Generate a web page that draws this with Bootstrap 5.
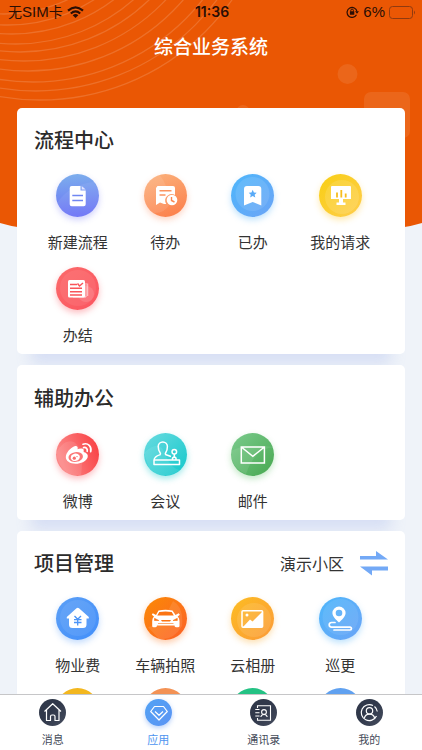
<!DOCTYPE html>
<html lang="zh-CN">
<head>
<meta charset="utf-8">
<meta name="viewport" content="width=device-width, initial-scale=1">
<title>综合业务系统</title>
<link href="https://cdn.jsdelivr.net/npm/bootstrap@5.3.0/dist/css/bootstrap.min.css" rel="stylesheet">
<style>
body{font-family:"Liberation Sans","Noto Sans CJK SC",sans-serif;background:#eff3f9;color:#333}
.cn{font-family:"Noto Sans CJK SC",sans-serif}
.scene{z-index:0}
.backdrop{z-index:-1;height:229px}
.status{height:24px;color:#2a0e04;font-size:15px;line-height:24px;padding:0 6px 0 8px}
.carrier{font-size:14px}
.carrier b{font-size:15px;font-weight:400}
.clock{font-family:Inter,sans-serif;font-weight:600;font-size:14px}
.apptitle{font-size:19px;font-weight:500;line-height:28px;padding:8px 0 48px}
.panels{padding:0 17px;gap:11px;scrollbar-width:none}
.panel{border-radius:5px;padding:18px 17px 9px;box-shadow:0 24px 14px -14px rgba(140,160,230,.24)}
.panel h2{font-size:20px;font-weight:500;line-height:28px;margin:0;color:#2b2b2b}
.tiles{display:grid;grid-template-columns:repeat(4,1fr);row-gap:15px;padding:20px 4px 0 0}
.roomy{padding-top:19px}
.roomy .tiles{padding-top:21px}
.tiles.tight{row-gap:13px}
.tile{font-size:15px;line-height:20px;gap:15px;color:#333}
.disc{width:43px;height:43px;border-radius:50%}
.disc svg,.tabdisc svg{display:block;width:100%;height:100%}
.indigo{background:linear-gradient(175deg,#7db0ec,#686cf7);box-shadow:0 3px 6px #686cf750}
.peach{background:linear-gradient(160deg,#fbb27c,#fc7c48);box-shadow:0 3px 6px #fc7c4850}
.sky{background:linear-gradient(135deg,#4db6fb,#6ba4f6);box-shadow:0 3px 6px #55b4fb60}
.gold{background:linear-gradient(135deg,#f8cf12,#ffcd4e);box-shadow:0 3px 6px #ffd04a70}
.rose{background:linear-gradient(135deg,#fb6a6a,#fb5560);box-shadow:0 3px 6px #fb556060}
.coral{background:linear-gradient(70deg,#fb8585 20%,#f9393d);box-shadow:0 3px 6px #fb556060}
.aqua{background:linear-gradient(135deg,#6adbe0,#12c8cb);box-shadow:0 3px 6px #12c8cb60}
.leaf{background:linear-gradient(135deg,#7bcb8d,#47a850);box-shadow:0 3px 6px #47b85050}
.azure{background:linear-gradient(135deg,#5b9ff6,#438ffa);box-shadow:0 3px 6px #438ffa50}
.flame{background:linear-gradient(135deg,#fb8a05,#fc6127);box-shadow:0 3px 6px #fc7c2760}
.amber{background:linear-gradient(135deg,#fdbd22,#fb9a38);box-shadow:0 3px 6px #fbb03860}
.honey{background:#f3b71f}.clay{background:#f39255}.mint{background:#24c284}.blue{background:#60a1f0}
.site{font-size:16px;line-height:24px;gap:16px;color:#333}
.tabs{border-top:1px solid #c6c6c8;height:56px;padding-top:4px;z-index:2}
.tab{font-size:11px;line-height:16px;gap:5px;color:#454b5a}
.tab.on{color:#4d94f0}
.tabdisc{width:27px;height:27px;border-radius:50%;background:linear-gradient(135deg,#30384a 45%,#464d5f)}
.on .tabdisc{background:linear-gradient(135deg,#51a2f4,#5c94f4);box-shadow:0 2px 5px #5c94f470}
</style>
<script src="https://cdn.jsdelivr.net/npm/bootstrap@5.3.0/dist/js/bootstrap.bundle.min.js"></script>
</head>
<body>
<div class="scene position-relative vh-100 d-flex flex-column overflow-hidden">
<svg class="backdrop position-absolute top-0 start-0 w-100" viewBox="0 0 422 229" preserveAspectRatio="none" aria-hidden="true">
<path fill="#ea5704" d="M0 0H422V223Q402 229 380 229H42Q20 229 0 223Z"/>
<g fill="none" stroke="#fff" stroke-opacity=".15" stroke-width="1.3"><circle cx="40" cy="-134" r="234"/><circle cx="36" cy="-134" r="225"/><circle cx="33" cy="-134" r="216"/><circle cx="28" cy="-134" r="205"/><circle cx="24" cy="-134" r="195"/><circle cx="20" cy="-134" r="186"/><circle cx="16" cy="-134" r="178"/><circle cx="12" cy="-134" r="168"/><circle cx="8" cy="-134" r="159"/><circle cx="4" cy="-134" r="148"/></g>
<g fill="#fff" fill-opacity=".09"><circle cx="347.500" cy="74" r="10"/><rect x="364" y="92" width="46" height="46" rx="7"/><circle cx="243" cy="112" r="7"/></g>
</svg>

<div class="status row g-0 align-items-center flex-shrink-0">
<div class="col d-flex align-items-center gap-1"><span class="carrier">无<b>SIM</b>卡</span>
<svg width="17" height="12" viewBox="0 0 17 12" aria-label="Wi-Fi"><g fill="none" stroke="#2a0e04" stroke-width="2.200"><path d="M1 4.600Q8.500-2 16 4.600"/><path d="M3.800 7.500Q8.500 3.400 13.200 7.500"/></g><path fill="#2a0e04" d="M5.700 9.200Q8.500 6.900 11.300 9.200L8.500 12Z"/></svg></div>
<div class="col-auto clock">11:36</div>
<div class="col d-flex align-items-center justify-content-end gap-1">
<svg width="13" height="12" viewBox="0 0 13 12" aria-hidden="true"><path d="M10.500 8.800A5 5 0 1 1 11 5.500" fill="none" stroke="#2a0e04" stroke-width="1.200"/><path d="M9 5.200H13L11 7.800Z" fill="#2a0e04"/><rect x="3.900" y="5.300" width="4.400" height="3.400" rx=".5" fill="#2a0e04"/><path d="M4.800 5.500V4.400a1.300 1.300 0 0 1 2.600 0V5.500" fill="none" stroke="#2a0e04"/></svg>
<span>6%</span>
<svg width="27" height="13" viewBox="0 0 27 13" aria-hidden="true"><rect x=".5" y=".5" width="23" height="12" rx="3" fill="none" stroke="#8f3a10"/><path d="M25 4.500Q27 6.500 25 8.500Z" fill="#8f3a10"/></svg>
</div></div>
<h1 class="apptitle cn text-white text-center m-0 flex-shrink-0">综合业务系统</h1>

<main class="panels cn d-flex flex-column flex-fill overflow-auto">
<section class="panel bg-white flex-shrink-0">
<h2>流程中心</h2>
<div class="tiles">
<button class="tile btn border-0 p-0 d-flex flex-column align-items-center"><span class="disc indigo"><svg viewBox="0 0 43 43"><path d="M0 30Q14 10 38 8A21 21 0 0 1 21 43Q5 42 0 30" fill="#fff" opacity=".07"/><path fill="#fff" d="M15.700 12H24.500V16.500H29.700V30.300a2 2 0 0 1-2 2H15.700a2 2 0 0 1-2-2V14a2 2 0 0 1 2-2Z"/><path fill="#e3e4ff" d="M25.700 12L29.700 15.600H25.700Z"/><path stroke="#6f86f2" stroke-width="1.600" d="M16.300 21.500H27M16.300 26.500H27"/></svg></span>新建流程</button>
<button class="tile btn border-0 p-0 d-flex flex-column align-items-center"><span class="disc peach"><svg viewBox="0 0 43 43"><path d="M15 0Q25 12 26 30Q20 40 9 39Q-3 30 1 14Q6 3 15 0" fill="#fff" opacity=".1"/><path fill="#fff" d="M13.500 12H29a2 2 0 0 1 2 2V21a6.500 6.500 0 0 0-8.800 9H20L16 28.500 12 31V14Z"/><path stroke="#fb9460" stroke-width="1.400" d="M15.500 16.700H27.500M15.500 21H21.500"/><circle cx="28" cy="26" r="5.300" fill="#fff"/><path d="M27.500 23V26.500L30.500 28" fill="none" stroke="#fb8750" stroke-width="1.400"/></svg></span>待办</button>
<button class="tile btn border-0 p-0 d-flex flex-column align-items-center"><span class="disc sky"><svg viewBox="0 0 43 43"><circle cx="21.500" cy="20" r="17" fill="#fff" opacity=".1"/><path fill="#fff" d="M16 12H27.300a3 3 0 0 1 3 3V31.500L21.700 28 13 31.500V15a3 3 0 0 1 3-3Z"/><path fill="#58aaf7" d="M21.700 15.800L22.900 18.600 25.700 18.800 23.600 20.700 24.300 23.600 21.700 22.100 19.100 23.600 19.800 20.700 17.700 18.800 20.500 18.600Z"/></svg></span>已办</button>
<button class="tile btn border-0 p-0 d-flex flex-column align-items-center"><span class="disc gold"><svg viewBox="0 0 43 43"><circle cx="23" cy="23" r="17" fill="#fff" opacity=".12"/><path fill="#fff" d="M13 12H31a1 1 0 0 1 1 1V25H24V28.500H26.500V31H17.500V28.500H20V25H12V13a1 1 0 0 1 1-1Z"/><path stroke="#f7bd1d" stroke-width="1.800" d="M18 18.500V23.500M22.300 16V23.500M26.700 19.500V23.500"/></svg></span>我的请求</button>
<button class="tile btn border-0 p-0 d-flex flex-column align-items-center"><span class="disc rose"><svg viewBox="0 0 43 43"><circle cx="22" cy="21" r="18" fill="#fff" opacity=".07"/><circle cx="30" cy="27" r="8" fill="#fff" opacity=".13"/><rect x="12" y="13" width="17" height="17.500" rx="1.500" fill="#fff"/><path d="M30 16V30H17M31.700 16.500V29" fill="none" stroke="#fff" stroke-width=".8" opacity=".8"/><path stroke="#f9545a" stroke-width="1.500" d="M14 17.500H21M14 21.300H26M14 24.700H26M14 28H26" /><path d="M21.500 16.500L23.500 19 27 16" fill="none" stroke="#f9545a" stroke-width="1.500"/></svg></span>办结</button>
</div></section>

<section class="panel roomy bg-white flex-shrink-0">
<h2>辅助办公</h2>
<div class="tiles">
<button class="tile btn border-0 p-0 d-flex flex-column align-items-center"><span class="disc coral"><svg viewBox="0 0 43 43"><path d="M0 20Q8 5 18 9Q29 16 25 42Q5 45 0 20" fill="#fff" opacity=".1"/><path fill="#fff" d="M18.500 13.300C21 12.500 22.300 14 21.500 16.300C24 15.300 27.500 15.300 27.700 17C27.800 18 27.200 18.800 28.200 19.200C31 20 32.500 22 31.500 24.700C30 28.500 25 30.700 19.500 30.700C14 30.700 9.800 28 9.800 24C9.800 20 14.500 14.600 18.500 13.300Z"/><ellipse cx="19.700" cy="24" rx="7.300" ry="4.900" fill="#fb7777" transform="rotate(-8 19.700 24)"/><ellipse cx="19.300" cy="24.300" rx="4.600" ry="3.700" fill="#fff" transform="rotate(-15 19.300 24.300)"/><circle cx="18.300" cy="25.200" r="1.600" fill="#f96b6b"/><circle cx="21" cy="23.600" r=".7" fill="#f96b6b"/><path d="M27 11.200C32 9.500 36 13.500 34.700 18.600M27.600 14.600C30 14 31.900 15.800 31.200 18.300" fill="none" stroke="#fff" stroke-width="1.700" stroke-linecap="round"/></svg></span>微博</button>
<button class="tile btn border-0 p-0 d-flex flex-column align-items-center"><span class="disc aqua"><svg viewBox="0 0 43 43"><path d="M0 20Q16 5 21 21Q27 36 36 37Q19 49 5 35Z" fill="#fff" opacity=".09"/><g fill="none" stroke="#fff" stroke-width="1.500" stroke-linejoin="round"><path d="M10 27V31.500H35.500V27ZM10 27C10.500 23.500 13 22.800 16 21.800Q17 21 16 19.500Q14.200 17 14.200 13.500A4.600 4.600 0 0 1 23.400 13.500Q23.400 17 21.800 19.500Q20.800 21 22 21.800Q24 22.500 27 23.500M28.500 27V25Q30.300 23.300 32 25V27M30.300 21V24"/><circle cx="30.300" cy="18.800" r="2.300"/></g></svg></span>会议</button>
<button class="tile btn border-0 p-0 d-flex flex-column align-items-center"><span class="disc leaf"><svg viewBox="0 0 43 43"><path d="M0 18Q14 10 43 14Q24 15 15 41Q0 35 0 18" fill="#fff" opacity=".09"/><path d="M10.300 14H33.400V30H10.300ZM10.300 14L21.800 23.300 33.400 14" fill="none" stroke="#fff" stroke-width="1.500"/></svg></span>邮件</button>
</div></section>

<section class="panel bg-white flex-shrink-0">
<div class="d-flex justify-content-between align-items-center"><h2>项目管理</h2>
<button class="site btn border-0 p-0 d-flex align-items-center">演示小区<svg width="28" height="26" viewBox="0 0 28 26" aria-hidden="true"><path fill="#73a9f6" d="M0 6H16V1L28 9.500H0ZM28 20.500H12V25.500L0 16.500H28Z"/></svg></button></div>
<div class="tiles tight">
<button class="tile btn border-0 p-0 d-flex flex-column align-items-center"><span class="disc azure"><svg viewBox="0 0 43 43"><circle cx="22" cy="21" r="18" fill="#fff" opacity=".08"/><path fill="#fff" d="M20.500 11.200Q21.700 10.200 23 11.200L32.800 20V21.500H30.500V27.500a3.500 3.500 0 0 1-3.500 3.500H16.500a3.500 3.500 0 0 1-3.500-3.500V21.500H10.800V20Z"/><path d="M18.500 19L21.700 22.300 25 19M21.700 22V28.500M18 22.700H25.500M18 25.500H25.500" fill="none" stroke="#4b94f7" stroke-width="1.300"/></svg></span>物业费</button>
<button class="tile btn border-0 p-0 d-flex flex-column align-items-center"><span class="disc flame"><svg viewBox="0 0 43 43"><path d="M4 30Q18 28 29 4Q40 10 38 29Q29 44 15 42Z" fill="#fff" opacity=".1"/><path fill="#fff" d="M14.500 13.500Q21.500 12 28.500 13.500L31.500 18 34.700 16.300 35.800 17.800 33.700 19.500Q35.500 21 35.500 24V29Q35.500 30.300 34 30.300H32Q30.500 30.300 30.500 28.500H13Q13 30.300 11.500 30.300H9.500Q8.200 30.300 8.200 29V24Q8.200 21 10 19.500L7.800 17.800 8.800 16.300 12 18Z"/><path fill="#fb7413" d="M15.300 15Q21.500 13.900 27.700 15L29.800 18.500H13.200ZM17 23H27L26 24.500H18Z"/><path d="M10.500 21.300L14.800 23.500H10.500ZM33.300 21.300L29 23.500H33.300ZM14 26.500H29.500" fill="#fb7413" stroke="#fb7413" stroke-width=".6"/></svg></span>车辆拍照</button>
<button class="tile btn border-0 p-0 d-flex flex-column align-items-center"><span class="disc amber"><svg viewBox="0 0 43 43"><circle cx="23" cy="23" r="17" fill="#fff" opacity=".1"/><rect x="11" y="13.700" width="20.600" height="16.600" rx="1" fill="none" stroke="#fff" stroke-width="1.500"/><path fill="#fff" d="M12 30L19 22.500 21.500 24.500 31.500 14.500V30Z"/><circle cx="16" cy="18" r="1.500" fill="#fff"/></svg></span>云相册</button>
<button class="tile btn border-0 p-0 d-flex flex-column align-items-center"><span class="disc sky"><svg viewBox="0 0 43 43"><circle cx="21.500" cy="20" r="18" fill="#fff" opacity=".08"/><path fill="#fff" fill-rule="evenodd" d="M20 9.500a6.600 6.600 0 0 1 6.600 6.600C26.600 19.500 23 23 20 25.500C17 23 13.400 19.500 13.400 16.100A6.600 6.600 0 0 1 20 9.500ZM20 12.700a3.300 3.300 0 1 0 0 6.600a3.300 3.300 0 0 0 0-6.600Z"/><path d="M16 25.500H12.500a2.300 2.300 0 0 0 0 4.600H31a1.300 1.300 0 0 1 0 2.900H15" fill="none" stroke="#fff" stroke-width="1.700" stroke-linecap="round"/></svg></span>巡更</button>
<span class="disc honey mx-auto"></span><span class="disc clay mx-auto"></span><span class="disc mint mx-auto"></span><span class="disc blue mx-auto"></span>
</div></section>
</main>

<nav class="tabs cn bg-white row g-0 flex-shrink-0">
<a href="#" class="tab col d-flex flex-column align-items-center text-decoration-none"><span class="tabdisc"><svg viewBox="0 0 27 27" fill="none" stroke="#fff" stroke-width="1.200" stroke-linejoin="round"><path d="M5.500 12.500L13.700 4.700 22 12.500M7.500 11V21.500H11.500V17.500a1.500 1.500 0 0 1 1.500-1.500h1.500a1.500 1.500 0 0 1 1.500 1.500V21.500H20V11"/></svg></span>消息</a>
<a href="#" class="tab on col d-flex flex-column align-items-center text-decoration-none" aria-current="page"><span class="tabdisc"><svg viewBox="0 0 27 27" fill="none" stroke="#fff" stroke-width="1.200" stroke-linejoin="round"><path d="M9.500 7.500H18.500L22.300 12.500 14 21 5.700 12.500ZM10 12.500L14 16.300 18 12.500"/></svg></span>应用</a>
<a href="#" class="tab col d-flex flex-column align-items-center text-decoration-none"><span class="tabdisc"><svg viewBox="0 0 27 27" fill="none" stroke="#fff" stroke-width="1.100"><path d="M7.500 9V6.800H20.500V21.300H7.500V19M5.300 10.500H9.500M5.300 13.800H9.500M5.300 17H9.500"/><circle cx="14" cy="13" r="2.400"/><path d="M10.800 18Q11.300 15.500 14 15.500T17.200 18"/></svg></span>通讯录</a>
<a href="#" class="tab col d-flex flex-column align-items-center text-decoration-none"><span class="tabdisc"><svg viewBox="0 0 27 27" fill="none" stroke="#fff" stroke-width="1.200"><path d="M20.500 17A8 8 0 1 1 17 6.500M18.500 7.500A8 8 0 0 1 21.300 12.500"/><circle cx="13.500" cy="11.800" r="3.200"/><path d="M8.300 19.500Q9 15.200 13.500 15.200T18.700 19.500"/></svg></span>我的</a>
</nav>
</div>
</body>
</html>
